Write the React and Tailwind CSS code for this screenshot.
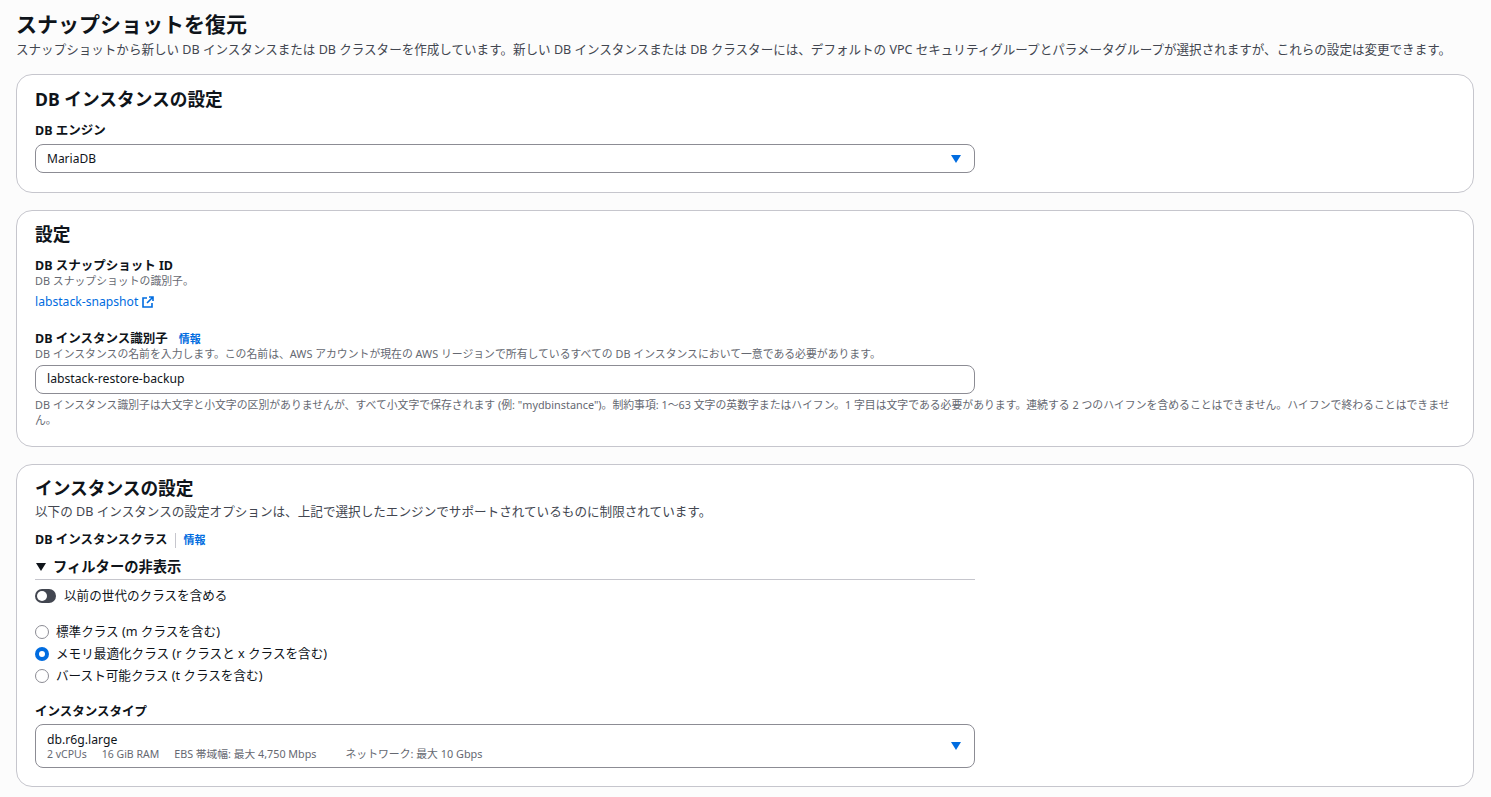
const Arrow = () => (
  <svg width="10" height="8" viewBox="0 0 10 8" className="shrink-0">
    <path d="M0 0h10L5 8z" fill="#006ce0" />
  </svg>
);

const Label = ({ children }) => (
  <div className="text-[12.5px] leading-[16px] font-bold text-[#0f141a]">{children}</div>
);

const Hint = ({ children }) => (
  <div className="text-[10.85px] leading-[15px] text-[#656871]">{children}</div>
);

const Card = ({ className, children }) => (
  <section className={`rounded-2xl border border-[#c6c6cd] bg-white px-[18px] ${className}`}>{children}</section>
);

const Radio = ({ label, checked }) => (
  <div className="flex h-[22px] items-center gap-[7px] text-[12.6px] text-[#0f141a]">
    {checked ? (
      <span className="flex h-[14px] w-[14px] items-center justify-center rounded-full bg-[#006ce0]">
        <span className="h-[6px] w-[6px] rounded-full bg-white" />
      </span>
    ) : (
      <span className="h-[14px] w-[14px] rounded-full border border-[#8c8c94] bg-white" />
    )}
    <span>{label}</span>
  </div>
);

export default function App() {
  return (
    <div
      className="h-[797px] overflow-hidden bg-[#fcfcfc] pt-[10px] pr-[17px] pl-4"
      style={{ fontFamily: '"Noto Sans", "Noto Sans CJK JP", sans-serif' }}
    >
      <h1 className="text-[21px] leading-[28px] font-bold text-[#0f141a]">スナップショットを復元</h1>
      <p className="mt-[4px] text-[12.56px] leading-[16px] whitespace-nowrap text-[#424650]">
        スナップショットから新しい DB インスタンスまたは DB クラスターを作成しています。新しい DB インスタンスまたは DB クラスターには、デフォルトの VPC セキュリティグループとパラメータグループが選択されますが、これらの設定は変更できます。
      </p>

      <Card className="mt-[16px] h-[119px] pt-[13px]">
        <h2 className="text-[17.7px] leading-[22px] font-bold text-[#0f141a]">DB インスタンスの設定</h2>
        <div className="mt-[13px]">
          <Label>DB エンジン</Label>
        </div>
        <div className="mt-[5px] flex h-[29px] w-[940px] items-center justify-between rounded-lg border border-[#8c8c94] bg-white pr-[13px] pl-[11px] text-[12px] text-[#0f141a]">
          <span>MariaDB</span>
          <Arrow />
        </div>
      </Card>

      <Card className="mt-[17px] h-[237px] pt-[12px]">
        <h2 className="text-[17.7px] leading-[22px] font-bold text-[#0f141a]">設定</h2>
        <div className="mt-[13px]">
          <Label>DB スナップショット ID</Label>
        </div>
        <div className="-mt-px">
          <Hint>DB スナップショットの識別子。</Hint>
        </div>
        <div className="mt-[5px] flex h-[18px] items-center gap-[4px] text-[12.15px] text-[#006ce0]">
          <span>labstack-snapshot</span>
          <svg width="12" height="12" viewBox="0 0 12 12" fill="none" stroke="#006ce0" strokeWidth="1.6">
            <path d="M5 2H1v9h9V7" />
            <path d="M7 1h4v4M11 1 5 7" />
          </svg>
        </div>
        <div className="mt-[20px] flex items-center gap-[11px]">
          <Label>DB インスタンス識別子</Label>
          <span className="text-[11px] leading-[16px] font-bold text-[#006ce0]">情報</span>
        </div>
        <div className="-mt-px">
          <Hint>DB インスタンスの名前を入力します。この名前は、AWS アカウントが現在の AWS リージョンで所有しているすべての DB インスタンスにおいて一意である必要があります。</Hint>
        </div>
        <div className="mt-[4px] flex h-[29px] w-[940px] items-center rounded-lg border border-[#8c8c94] bg-white pl-[11px] text-[12.2px] text-[#0f141a]">
          labstack-restore-backup
        </div>
        <div className="mt-[3px]">
          <Hint>DB インスタンス識別子は大文字と小文字の区別がありませんが、すべて小文字で保存されます (例: "mydbinstance")。制約事項: 1～63 文字の英数字またはハイフン。1 字目は文字である必要があります。連続する 2 つのハイフンを含めることはできません。ハイフンで終わることはできません。</Hint>
        </div>
      </Card>

      <Card className="mt-[17px] h-[323px] pt-[12px]">
        <h2 className="text-[17.7px] leading-[22px] font-bold text-[#0f141a]">インスタンスの設定</h2>
        <p className="mt-[5px] text-[12.6px] leading-[16px] text-[#424650]">
          以下の DB インスタンスの設定オプションは、上記で選択したエンジンでサポートされているものに制限されています。
        </p>
        <div className="mt-[12px] flex items-center">
          <Label>DB インスタンスクラス</Label>
          <span className="mr-[7px] ml-[8px] h-[15px] w-px bg-[#c6c6cd]" />
          <span className="text-[11px] leading-[16px] font-bold text-[#006ce0]">情報</span>
        </div>
        <div className="mt-[9px] flex h-[23px] w-[940px] items-center gap-[6px] border-b border-[#c6c6cd] pb-[3px]">
          <svg width="12" height="8" viewBox="0 0 12 8" className="shrink-0">
            <path d="M1 0h10L6 8z" fill="#0f141a" />
          </svg>
          <span className="text-[14.3px] leading-[18px] font-bold text-[#0f141a]">フィルターの非表示</span>
        </div>
        <div className="mt-[7px] flex h-[18px] items-center gap-[8px] text-[12.6px] text-[#0f141a]">
          <span className="flex h-[14px] w-[21px] items-center rounded-full bg-[#424650] pl-[2px]">
            <span className="h-[10px] w-[10px] rounded-full bg-white" />
          </span>
          <span>以前の世代のクラスを含める</span>
        </div>
        <div className="mt-[16px]">
          <Radio label="標準クラス (m クラスを含む)" />
          <Radio label="メモリ最適化クラス (r クラスと x クラスを含む)" checked />
          <Radio label="バースト可能クラス (t クラスを含む)" />
        </div>
        <div className="mt-[17px]">
          <Label>インスタンスタイプ</Label>
        </div>
        <div className="mt-[4px] flex h-[44px] w-[940px] items-center justify-between rounded-lg border border-[#8c8c94] bg-white pr-[13px] pl-[11px]">
          <div>
            <div className="text-[12.2px] leading-[15px] text-[#0f141a]">db.r6g.large</div>
            <div className="flex text-[10.5px] leading-[14px] text-[#656871]">
              <span className="mr-[15px]">2 vCPUs</span>
              <span className="mr-[15px]">16 GiB RAM</span>
              <span className="mr-[29px] text-[10.75px]">EBS 帯域幅: 最大 4,750 Mbps</span>
              <span className="text-[10.85px]">ネットワーク: 最大 10 Gbps</span>
            </div>
          </div>
          <Arrow />
        </div>
      </Card>
    </div>
  );
}
